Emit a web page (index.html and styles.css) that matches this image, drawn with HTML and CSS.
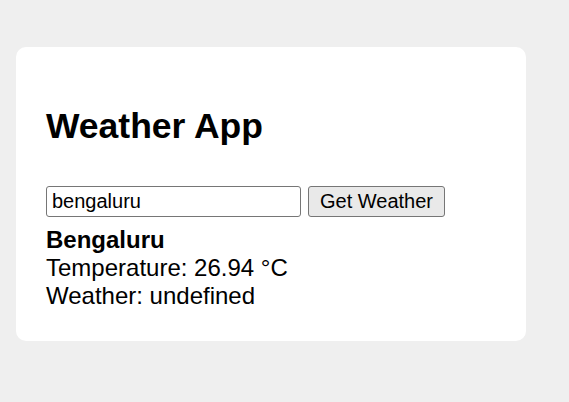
FILE: index.html
```html
<!DOCTYPE html>
<html lang="en">
<head>
<meta charset="utf-8">
<title>Weather App</title>
<link rel="stylesheet" href="styles.css">
</head>
<body>
  <div class="card">
    <h1 class="title">Weather App</h1>
    <div class="search">
      <input class="city-input" type="text" value="bengaluru">
      <button class="get-btn" type="button">Get Weather</button>
    </div>
    <div class="result">
      <div class="city">Bengaluru</div>
      <div class="line">Temperature: 26.94 °C</div>
      <div class="line">Weather: undefined</div>
    </div>
  </div>
</body>
</html>
```

FILE: styles.css
```css
html, body {
  margin: 0;
  padding: 0;
}

body {
  background: #efefef;
  font-family: "Liberation Sans", Arial, sans-serif;
  color: #000;
  padding: 47px 16px 0;
}

.card {
  background: #fff;
  width: 450px;
  padding: 30px 30px 31px;
  border-radius: 10px;
}

.title {
  margin: 29px 0 39px;
  font-size: 35.5px;
  line-height: 41px;
  font-weight: bold;
}

.search {
  display: flex;
  gap: 7px;
}

.city-input {
  box-sizing: border-box;
  width: 255px;
  height: 31px;
  margin: 0;
  padding: 0 5px;
  border: 1px solid #767676;
  border-radius: 3px;
  font-family: "Liberation Sans", Arial, sans-serif;
  font-size: 20px;
  color: #000;
  background: #fff;
}

.get-btn {
  box-sizing: border-box;
  height: 31px;
  margin: 0;
  padding: 0 11px;
  border: 1px solid #767676;
  border-radius: 3px;
  background: #e9e9e9;
  font-family: "Liberation Sans", Arial, sans-serif;
  font-size: 20px;
  color: #000;
}

.result {
  margin-top: 9px;
  font-size: 24px;
  line-height: normal;
}

.city {
  font-weight: bold;
}
```
